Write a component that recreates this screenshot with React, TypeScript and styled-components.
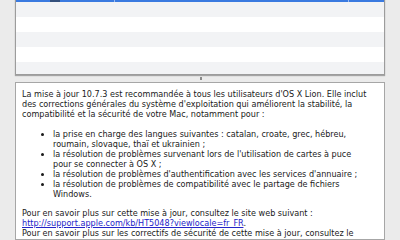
import styled, { createGlobalStyle } from "styled-components"

const GlobalStyle = createGlobalStyle`
    html, body {
        margin: 0;
        padding: 0;
        background-color: #ebebeb;
    }
    * { box-sizing: border-box; }
`

const rows = [true, false, true, false, true]

const bullets = [
    ["la prise en charge des langues suivantes : catalan, croate, grec, hébreu,", "roumain, slovaque, thaï et ukrainien ;"],
    ["la résolution de problèmes survenant lors de l'utilisation de cartes à puce", "pour se connecter à OS X ;"],
    ["la résolution de problèmes d'authentification avec les services d'annuaire ;"],
    ["la résolution de problèmes de compatibilité avec le partage de fichiers", "Windows."],
]

function App() {
    return (
        <>
            <GlobalStyle />
            <Window>
                <TableBox>
                    <SelectedRow>
                        <HeadCell><SortMark /></HeadCell>
                        <HeadCell />
                        <HeadCell $last />
                    </SelectedRow>
                    {rows.map((striped, i) => (
                        <Row key={i} $striped={striped} />
                    ))}
                </TableBox>

                <Splitter>
                    <Dimple />
                </Splitter>

                <TextBox>
                    <Paragraph>
                        <Line>La mise à jour 10.7.3 est recommandée à tous les utilisateurs d'OS X Lion. Elle inclut</Line>
                        <Line>des corrections générales du système d'exploitation qui améliorent la stabilité, la</Line>
                        <Line>compatibilité et la sécurité de votre Mac, notamment pour :</Line>
                    </Paragraph>

                    <List>
                        {bullets.map((item, i) => (
                            <Item key={i}>
                                {item.map((line, j) => <Line key={j}>{line}</Line>)}
                            </Item>
                        ))}
                    </List>

                    <Paragraph>
                        <Line>Pour en savoir plus sur cette mise à jour, consultez le site web suivant :</Line>
                        <Line><Link href="#">http://support.apple.com/kb/HT5048?viewlocale=fr_FR</Link>.</Line>
                        <Line>Pour en savoir plus sur les correctifs de sécurité de cette mise à jour, consultez le</Line>
                    </Paragraph>
                </TextBox>
            </Window>
        </>
    )
}

const Window = styled.div`
    width: 400px;
    height: 240px;
    overflow: hidden;
    padding: 0 15px;
    display: flex;
    flex-direction: column;
`

const TableBox = styled.div`
    margin-top: -1px;
    height: 76px;
    flex-shrink: 0;
    overflow: hidden;
    background-color: #ffffff;
    border: 1px solid #9c9c9c;
    box-shadow: 0 1px 1px rgba(0, 0, 0, 0.3);
`

const SelectedRow = styled.div`
    height: 2px;
    display: grid;
    grid-template-columns: 99px 234px 1fr;
    background-color: #3a7ae0;
`

const HeadCell = styled.div<{ $last?: boolean }>`
    display: flex;
    border-right: ${p => p.$last ? "none" : "1px solid #9dbcf0"};
`

const SortMark = styled.div`
    margin-left: 34px;
    width: 10px;
    height: 2px;
    background-color: #34507c;
`

const Row = styled.div<{ $striped: boolean }>`
    height: 15px;
    background-color: ${p => p.$striped ? "#f2f3f5" : "#ffffff"};
`

const Splitter = styled.div`
    height: 7px;
    flex-shrink: 0;
    display: flex;
    justify-content: center;
    align-items: center;
`

const Dimple = styled.div`
    width: 2px;
    height: 3px;
    margin-left: 1px;
    background-color: #8a8a8a;
`

const TextBox = styled.div`
    flex: 1;
    min-height: 0;
    overflow: hidden;
    background-color: #ffffff;
    border: 1px solid #a6a6a6;
    padding: 6px 6px;

    font-family: "DejaVu Sans", Verdana, sans-serif;
    font-size: 8.1px;
    line-height: 10px;
    color: #1a1a1a;
`

const Paragraph = styled.div`
    margin-bottom: 9.5px;
`

const Line = styled.div`
    white-space: nowrap;
`

const List = styled.ul`
    margin: 0 0 9.5px 0;
    padding-left: 31px;
    list-style: disc;
`

const Item = styled.li`
    padding-left: 0;
`

const Link = styled.a`
    color: #2323c8;
    text-decoration: underline;
`

export default App
